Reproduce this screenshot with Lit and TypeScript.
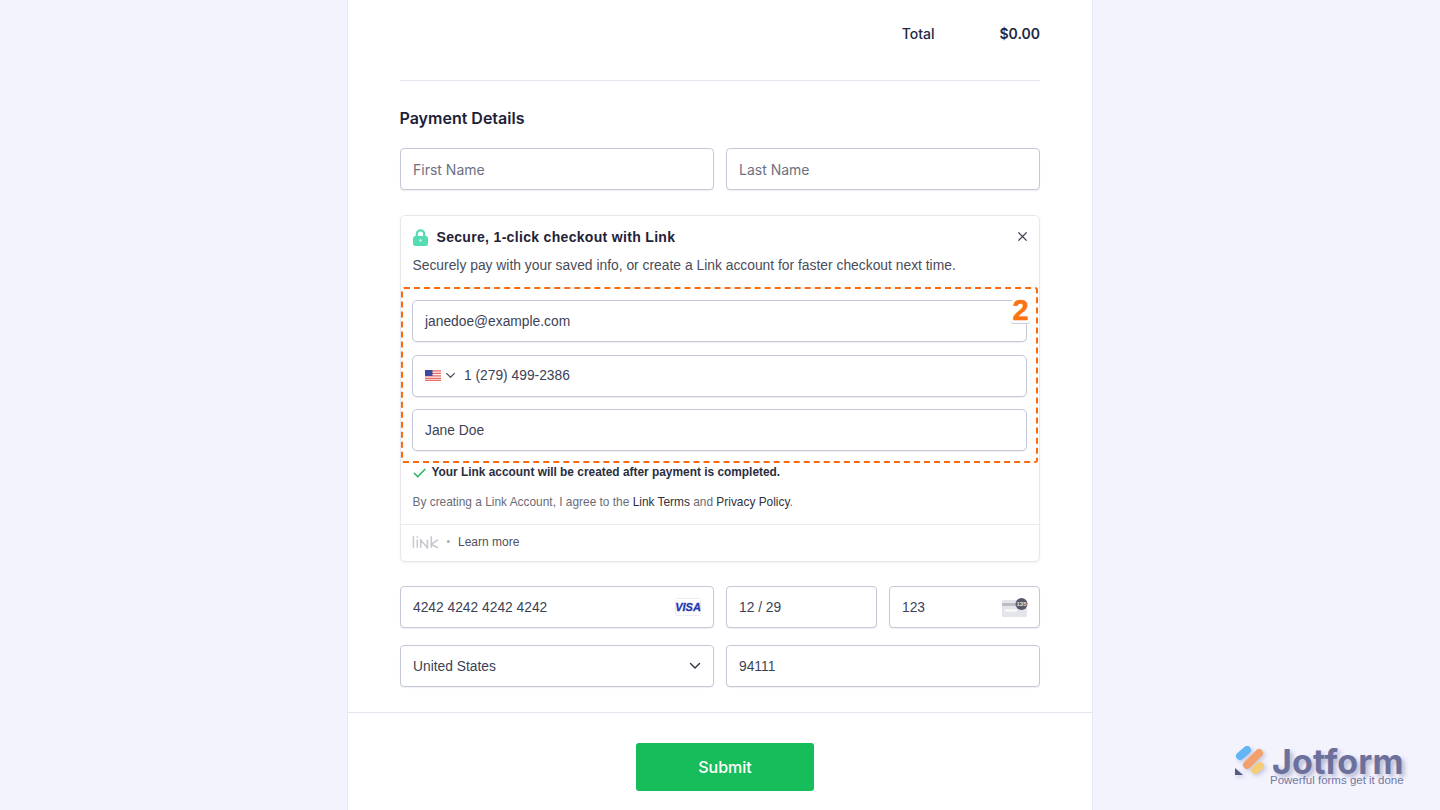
import { LitElement, html, css } from "lit";
import { customElement } from "lit/decorators.js";

const chevron = (cls: string) => html`<svg class=${cls} viewBox="0 0 12 8" fill="none" stroke="currentColor" stroke-width="1.4" stroke-linecap="round" stroke-linejoin="round"><path d="M1.500 1.500 6 6l4.500-4.500"/></svg>`;

@customElement("app-root")
export class AppRoot extends LitElement {
  static styles = css`
    :host {
      display: block;
      position: relative;
      height: 810px;
      overflow: hidden;
      background: #f3f3fe;
      font-family: Inter, "Liberation Sans", sans-serif;
      color: #0a1551;
    }
    .card {
      box-sizing: border-box;
      width: 746px;
      height: 810px;
      margin-left: 347px;
      background: #fff;
      border-left: 1px solid #e6e8f2;
      border-right: 1px solid #e6e8f2;
    }
    .section {
      padding: 0 52px;
    }
    .total {
      display: flex;
      justify-content: flex-end;
      gap: 65px;
      padding-top: 25px;
      box-sizing: border-box;
      border-bottom: 1px solid #e3e5ee;
      height: 81px;
      font-size: 14px;
      line-height: 18px;
      font-weight: 500;
      color: #23283f;
    }
    .total .amt {
      font-weight: 600;
    }
    h2 {
      margin: 26px 0 0 -0.500px;
      font-size: 16px;
      line-height: 22px;
      font-weight: 600;
      color: #1d2036;
    }
    .row {
      display: flex;
      gap: 12px;
    }
    .row.names {
      margin-top: 19px;
    }
    .row.cards {
      margin-top: 24px;
    }
    .row.addr {
      margin-top: 17px;
    }
    .input {
      box-sizing: border-box;
      flex: 1 1 0;
      min-width: 0;
      height: 42px;
      display: flex;
      align-items: center;
      justify-content: space-between;
      padding: 0 12px;
      background: #fff;
      border: 1px solid #c5c8d8;
      border-radius: 4px;
      box-shadow: 0 1px 1px rgba(40, 45, 80, 0.08);
      font-family: "Liberation Sans", Arial, sans-serif;
      font-size: 13.800px;
      color: #3c4256;
    }
    .input.ph {
      font-family: Inter, sans-serif;
      font-size: 14px;
      color: #6e7082;
    }
    .wide {
      flex: 0 0 314px;
    }
    .link {
      box-sizing: border-box;
      margin-top: 25px;
      height: 347px;
      padding: 0 11.500px;
      border: 1px solid #e8e8ec;
      border-radius: 5px;
      box-shadow: 0 1px 2px rgba(40, 45, 80, 0.08);
      font-family: "Liberation Sans", Arial, sans-serif;
      color: #30313d;
      position: relative;
    }
    .link-title {
      display: flex;
      align-items: center;
      gap: 9px;
      padding-top: 13px;
      height: 17px;
      font-size: 14px;
      line-height: 17px;
      font-weight: 700;
      letter-spacing: 0.320px;
      color: #1f2338;
    }
    .lock {
      width: 15px;
      height: 17px;
      flex: none;
    }
    .close {
      position: absolute;
      right: 11.500px;
      top: 14.500px;
      width: 11px;
      height: 11px;
      color: #3a3c4c;
    }
    .link-sub {
      margin-top: 10px;
      font-size: 13.850px;
      line-height: 18px;
      color: #4a4c5a;
    }
    .fields {
      position: relative;
      margin: 26px 0 0 -0.500px;
      display: flex;
      flex-direction: column;
      gap: 12.500px;
      width: 615px;
    }
    .fields .input {
      flex: 0 0 42px;
      justify-content: flex-start;
      padding: 0 12px;
      border-radius: 5px;
    }
    .flag {
      width: 16px;
      height: 11px;
      flex: none;
    }
    .chev-sm {
      width: 11px;
      height: 7px;
      margin: 0 8px 0 4px;
      color: #4f5264;
      flex: none;
    }
    .dash {
      position: absolute;
      inset: -13px -11px -12px -11px;
      border: 2px dashed #fb6a0d;
      border-radius: 3px;
      pointer-events: none;
    }
    .badge {
      position: absolute;
      right: -3px;
      top: 0;
      width: 19px;
      height: 23px;
      background: #fff;
      border-radius: 3px;
      box-shadow: 0 1px 0 #c9cbd8;
      text-align: center;
      font-family: "Liberation Sans", sans-serif;
      font-size: 29px;
      line-height: 20px;
      font-weight: 700;
      color: #fb7412;
      -webkit-text-stroke: 0.500px #fb7412;
    }
    .created {
      display: flex;
      align-items: center;
      gap: 6px;
      margin-top: 13px;
      height: 16px;
      font-size: 11.900px;
      font-weight: 700;
      color: #2b2e3f;
    }
    .created svg {
      width: 13px;
      height: 10px;
      color: #22b35e;
      flex: none;
      margin-top: 2px;
    }
    .terms {
      margin-top: 14px;
      font-size: 11.900px;
      line-height: 16px;
      color: #6a6c78;
    }
    .terms b {
      font-weight: 400;
      color: #30313d;
    }
    .link-foot {
      display: flex;
      align-items: center;
      gap: 8px;
      margin: 14px -11.500px 0;
      padding: 0 11.500px 3px;
      box-sizing: border-box;
      height: 37px;
      border-top: 1px solid #ececf0;
      font-size: 12px;
      color: #4f5160;
    }
    .link-logo {
      width: 27px;
      height: 14px;
      color: #c7c8ce;
      flex: none;
      margin-left: -1px;
    }
    .dot {
      color: #a4a5ad;
      font-size: 10px;
    }
    .visa {
      width: 26px;
      height: 18px;
      flex: none;
    }
    .cvc {
      width: 26px;
      height: 19px;
      flex: none;
      margin-right: -1px;
    }
    .chev {
      width: 12px;
      height: 8px;
      color: #30313d;
    }
    .foot {
      margin-top: 25px;
      padding: 30px 0 0 10px;
      border-top: 1px solid #e3e5ee;
      display: flex;
      justify-content: center;
    }
    button {
      width: 178px;
      height: 48px;
      border: 0;
      border-radius: 3px;
      background: #18bd5b;
      color: #fff;
      font: 500 16px Inter, sans-serif;
    }
    .mark {
      position: absolute;
      left: 1234px;
      top: 745px;
      width: 172px;
      height: 44px;
      pointer-events: none;
    }
    .mark svg {
      position: absolute;
      left: 0;
      top: 0;
      width: 34px;
      height: 34px;
      filter: drop-shadow(2px 2px 2px rgba(90, 95, 140, 0.3));
    }
    .mark-name {
      position: absolute;
      left: 38px;
      top: 4px;
      font-family: Inter, sans-serif;
      font-size: 34px;
      line-height: 26px;
      font-weight: 700;
      letter-spacing: 0.100px;
      color: #6c719b;
      text-shadow: 3px 3px 4px rgba(90, 95, 140, 0.4);
    }
    .mark-tag {
      position: absolute;
      left: 36px;
      top: 30px;
      white-space: nowrap;
      font-family: "Liberation Sans", sans-serif;
      font-size: 11.500px;
      line-height: 11px;
      color: #7377a0;
    }
  `;

  render() {
    return html`
      <div class="card">
        <div class="section">
          <div class="total"><span>Total</span><span class="amt">$0.00</span></div>
          <h2>Payment Details</h2>
          <div class="row names">
            <div class="input ph">First Name</div>
            <div class="input ph">Last Name</div>
          </div>
          ${this.renderLink()}
          <div class="row cards">
            <div class="input wide">
              <span>4242 4242 4242 4242</span>
              <svg class="visa" viewBox="0 0 26 18">
                <rect x=".5" y=".5" width="25" height="17" rx="1" fill="#fff" stroke="#eceef3"/>
                <text x="13" y="13" text-anchor="middle" font-family="Liberation Sans" font-size="11" font-weight="700" font-style="italic" fill="#2238b0" stroke="#2238b0" stroke-width=".3">VISA</text>
              </svg>
            </div>
            <div class="input"><span>12 / 29</span></div>
            <div class="input">
              <span>123</span>
              <svg class="cvc" viewBox="0 0 26 19">
                <rect y="2" width="25" height="17" rx="1.500" fill="#e4e5e9"/>
                <rect y="5" width="25" height="3" fill="#bcbdc3"/>
                <rect x="3" y="11" width="12" height="3" fill="#f6f6f8"/>
                <circle cx="19.500" cy="6" r="6" fill="#55586a"/>
                <text x="19.500" y="8" text-anchor="middle" font-family="Liberation Sans" font-size="6" font-weight="700" fill="#e6e7ec">135</text>
              </svg>
            </div>
          </div>
          <div class="row addr">
            <div class="input wide"><span>United States</span>${chevron("chev")}</div>
            <div class="input"><span>94111</span></div>
          </div>
        </div>
        <div class="foot"><button>Submit</button></div>
      </div>
      <div class="mark">
        <svg viewBox="0 0 34 34" fill="none" stroke-width="8" stroke-linecap="round">
          <path d="M6 11 13 5" stroke="#62b6f5"/>
          <path d="M13 20 25 8" stroke="#f2a06c"/>
          <path d="M21 25 26 21" stroke="#f5cd76"/>
          <path d="M1 23 9 30H1Z" fill="#565a82" stroke="none"/>
        </svg>
        <span class="mark-name">Jotform</span>
        <span class="mark-tag">Powerful forms get it done</span>
      </div>
    `;
  }

  renderLink() {
    return html`
      <div class="link">
        <div class="link-title">
          <svg class="lock" viewBox="0 0 15 17">
            <path d="M3.800 8V5a3.700 3.700 0 0 1 7.400 0V8" fill="none" stroke="#55dcb4" stroke-width="2.200"/>
            <rect y="7" width="15" height="10" rx="2.500" fill="#55dcb4"/>
            <circle cx="7.500" cy="11.500" r="1.300" fill="#c9f4e6"/>
          </svg>
          Secure, 1-click checkout with Link
        </div>
        <svg class="close" viewBox="0 0 12 12" fill="none" stroke="currentColor" stroke-width="1.500"><path d="M1.500 1.500l9 9M10.500 1.500l-9 9"/></svg>
        <div class="link-sub">Securely pay with your saved info, or create a Link account for faster checkout next time.</div>
        <div class="fields">
          <div class="input">janedoe@example.com</div>
          <div class="input">
            <svg class="flag" viewBox="0 0 16 11">
              <rect width="16" height="11" fill="#f7f1ee"/>
              <path d="M0 .8h16M0 3.300h16M0 5.800h16M0 8.300h16M0 10.400h16" stroke="#ec6a62" stroke-width="1.200"/>
              <rect width="7.500" height="6" fill="#3d4a9c"/>
            </svg>
            ${chevron("chev-sm")}
            <span>1 (279) 499-2386</span>
          </div>
          <div class="input">Jane Doe</div>
          <div class="dash"></div>
          <div class="badge">2</div>
        </div>
        <div class="created">
          <svg viewBox="0 0 13 10" fill="none" stroke="currentColor" stroke-width="1.500"><path d="M1 5l3.800 3.800L12.200 1"/></svg>
          Your Link account will be created after payment is completed.
        </div>
        <div class="terms">By creating a Link Account, I agree to the <b>Link Terms</b> and <b>Privacy Policy</b>.</div>
        <div class="link-foot">
          <svg class="link-logo" viewBox="0 0 28 14" fill="none" stroke="currentColor" stroke-width="1.600">
            <path d="M1.500 1v12M5.500 4.500V13M5.500 1v1.500M9 13V5l7 8V4.500M20 1v12M27 4.500l-7 5 7 3.500"/>
          </svg>
          <span class="dot">•</span>
          <span>Learn more</span>
        </div>
      </div>
    `;
  }
}
